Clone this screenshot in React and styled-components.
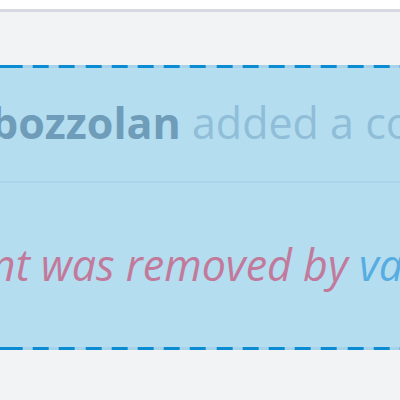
import React from "react";
import styled, { createGlobalStyle } from "styled-components";

const Global = createGlobalStyle`
  html, body { margin: 0; padding: 0; background: #ffffff; }
  body { font-family: "Open Sans", "Liberation Sans", sans-serif; }
`;

const Page = styled.div`
  width: 400px;
  height: 400px;
  overflow: hidden;
  padding-top: 9px;
  box-sizing: border-box;
  background: #ffffff;
`;

const Panel = styled.div`
  border-top: 3px solid #d8d8e2;
  background: #f2f3f5;
  padding-top: 53px;
  height: 400px;
`;

const DashedEdge = styled.div`
  height: 3px;
  background-color: #a6d3ea;
  background-image: repeating-linear-gradient(
    to right,
    #0a8bd2 0px,
    #0a8bd2 16px,
    transparent 16px,
    transparent 26.2px
  );
  background-position: 6.7px 0;
`;

const CommentBox = styled.div`
  background: #b4ddf0;
  overflow: hidden;
`;

const Row = styled.div`
  font-size: ${(p) => p.$size}px;
  line-height: 56px;
  white-space: nowrap;
  padding: ${(p) => p.$pad};
  border-bottom: ${(p) => (p.$divider ? "2px solid #a9d4e9" : "none")};
`;

const Inner = styled.div`
  margin-left: ${(p) => p.$shift}px;
`;

const Author = styled.span`
  font-weight: 700;
  color: #6f9cb9;
`;

const Action = styled.span`
  color: #90bdd7;
`;

const Removed = styled.span`
  font-style: italic;
  color: #c27a9b;
`;

const UserLink = styled.span`
  font-style: italic;
  color: #56ade2;
`;

export default function App() {
  return (
    <>
      <Global />
      <Page>
        <Panel>
          <DashedEdge />
          <CommentBox>
            <Row $size={43} $pad="27px 0 30px" $divider>
              <Inner $shift={-9}>
                <Author>bozzolan</Author> <Action>added a comment</Action>
              </Inner>
            </Row>
            <Row $size={43} $pad="54px 0 54px">
              <Inner $shift={-236}>
                <Removed>This comment was removed by </Removed>
                <UserLink>vanessa</UserLink>
              </Inner>
            </Row>
          </CommentBox>
          <DashedEdge />
        </Panel>
      </Page>
    </>
  );
}
